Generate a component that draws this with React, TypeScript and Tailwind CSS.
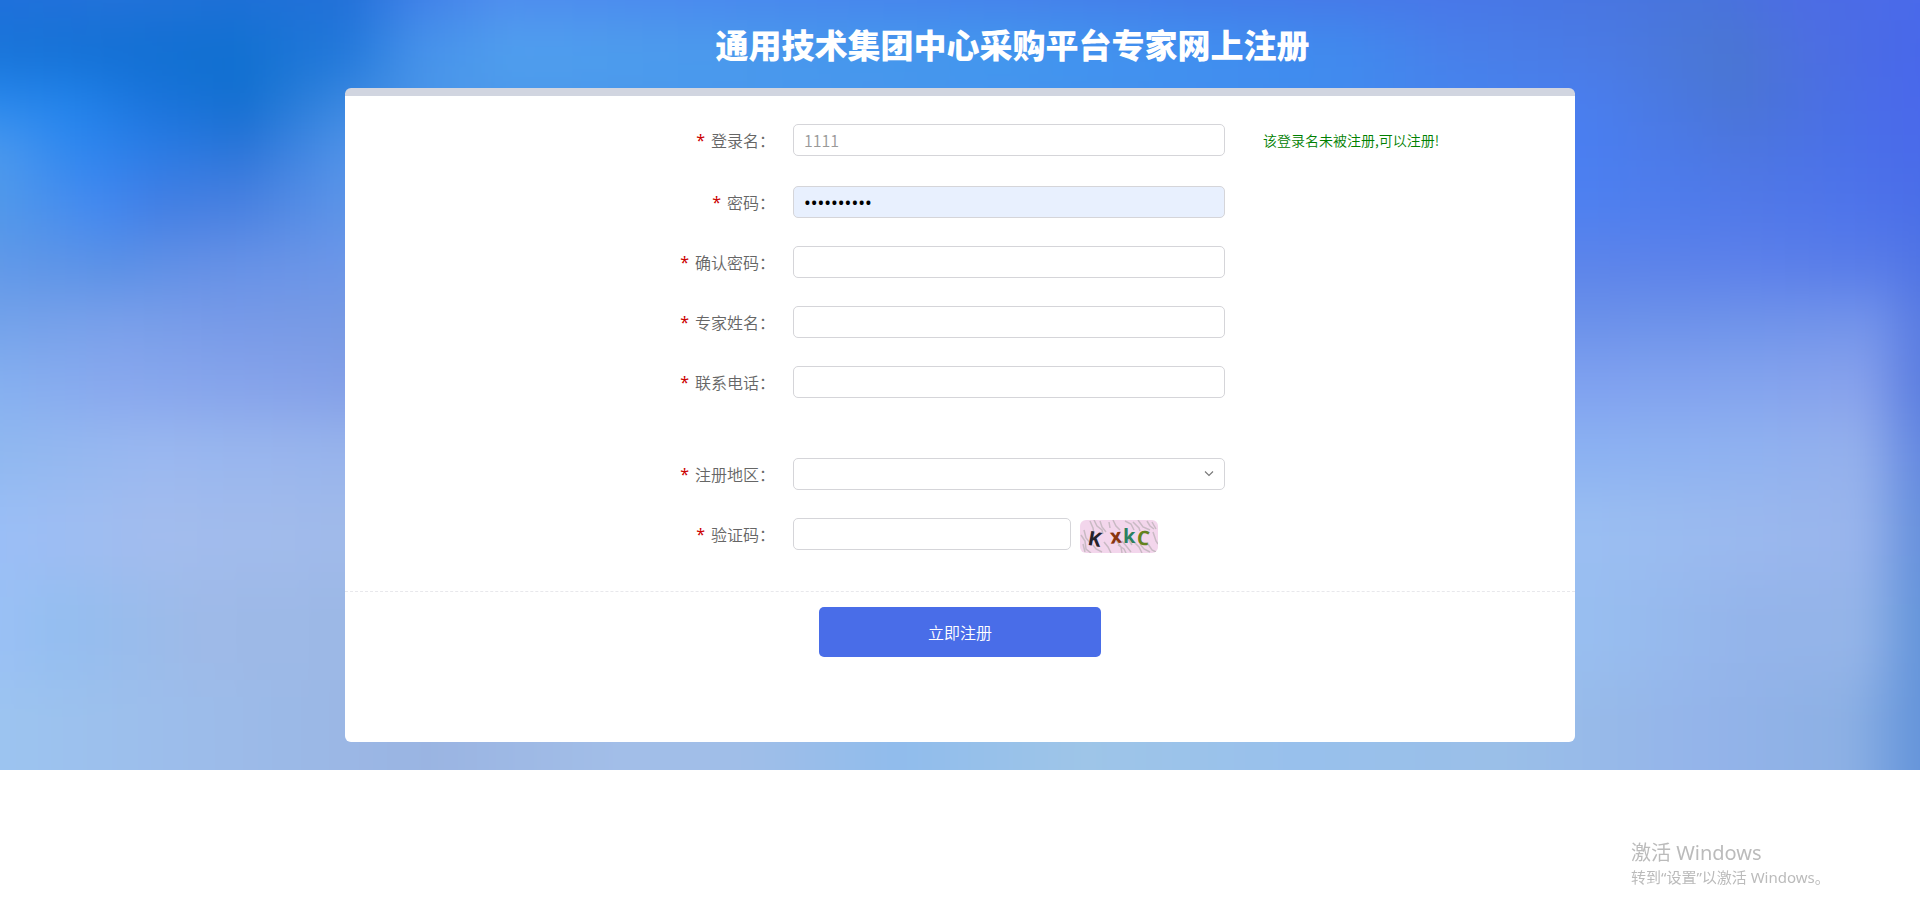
import type { ReactNode } from "react"
import { clsx } from "clsx"

type Band = { y: number; height: number; stops: [number, string][] }

// Horizontal color bands, blurred together into the backdrop
const bands: Band[] = [
  { y: -80, height: 100, stops: [[0, "#2070dc"], [115, "#2472da"], [230, "#1f70d8"], [345, "#2270d8"], [420, "#3f7fe8"], [500, "#4f8cee"], [800, "#4886ee"], [1200, "#447ae8"], [1450, "#4876e8"], [1700, "#4874dc"], [1800, "#4c6ce4"], [1920, "#4a6aea"]] },
  { y: 20, height: 60, stops: [[0, "#1874d8"], [115, "#1370d4"], [230, "#1070d0"], [345, "#2278da"], [420, "#4692ea"], [520, "#50a0ee"], [800, "#4898ec"], [1000, "#4298ee"], [1200, "#4090f0"], [1350, "#408aee"], [1450, "#4880ea"], [1600, "#4a7ae4"], [1730, "#4a76d2"], [1820, "#4c6ee2"], [1920, "#4868ea"]] },
  { y: 80, height: 45, stops: [[0, "#2888ee"], [70, "#2284ec"], [150, "#1a74dc"], [240, "#126fd0"], [345, "#3a88e0"], [450, "#4c98ea"], [800, "#4898ee"], [1300, "#408cee"], [1590, "#4a7eee"], [1740, "#4a74d6"], [1850, "#4a6ee6"], [1920, "#4a68ec"]] },
  { y: 125, height: 50, stops: [[0, "#4a98ee"], [70, "#3088f0"], [150, "#2a7ce6"], [240, "#2a74d8"], [345, "#4f92e8"], [1590, "#4a7ef0"], [1740, "#4c76e0"], [1850, "#4a70e8"], [1920, "#4a6aea"]] },
  { y: 175, height: 60, stops: [[0, "#5098ea"], [100, "#4288f0"], [160, "#427ee4"], [240, "#4880e0"], [345, "#5c94e8"], [1590, "#4e80f0"], [1750, "#5078e8"], [1850, "#4e74ea"], [1920, "#4a6ee8"]] },
  { y: 235, height: 60, stops: [[0, "#6098e8"], [115, "#5a90e6"], [200, "#6490e6"], [345, "#6c96e8"], [1590, "#5c84ea"], [1750, "#5c80ea"], [1890, "#567ae8"], [1920, "#5074e4"]] },
  { y: 295, height: 60, stops: [[0, "#74a2ea"], [115, "#7aa0ea"], [230, "#789ae8"], [345, "#789ae4"], [1590, "#6c92ea"], [1750, "#7094ea"], [1870, "#7494ea"], [1920, "#5a7ce2"]] },
  { y: 355, height: 65, stops: [[0, "#86b0f0"], [115, "#88a8ee"], [345, "#84a0e8"], [1590, "#80a2f0"], [1750, "#84a4ee"], [1860, "#88a2ec"], [1920, "#5c7ee0"]] },
  { y: 420, height: 70, stops: [[0, "#90b8f0"], [150, "#9ab8f0"], [345, "#98b4ec"], [1590, "#8cb2f2"], [1750, "#90b2f0"], [1860, "#94b0ec"], [1920, "#6488e0"]] },
  { y: 490, height: 90, stops: [[0, "#9abef6"], [150, "#a2bcee"], [345, "#a0baea"], [1590, "#9abef2"], [1750, "#9ab8ee"], [1860, "#98b4ec"], [1920, "#6690dc"]] },
  { y: 580, height: 100, stops: [[0, "#9ac0f5"], [60, "#94bef0"], [200, "#9ebae8"], [345, "#9cb8e6"], [1590, "#98bef0"], [1750, "#94b4ea"], [1860, "#94b4e8"], [1920, "#6494da"]] },
  { y: 680, height: 180, stops: [[0, "#9cc4f0"], [200, "#9cbcea"], [430, "#9ab4e2"], [620, "#a2bee8"], [740, "#a0bee8"], [900, "#90bcec"], [1080, "#9ec5e8"], [1300, "#98c0ec"], [1500, "#9abfe8"], [1700, "#94b4ea"], [1850, "#8cb0e4"], [1920, "#6494da"]] },
]

function Backdrop() {
  return (
    <svg
      aria-hidden="true"
      className="absolute inset-0 -z-10 h-full w-full"
      viewBox="0 0 1920 770"
      preserveAspectRatio="none"
    >
      <defs>
        <filter
          id="soften"
          filterUnits="userSpaceOnUse"
          x="-100"
          y="-100"
          width="2120"
          height="970"
          colorInterpolationFilters="sRGB"
        >
          <feGaussianBlur stdDeviation="14 26" />
        </filter>
        {bands.map((band) => (
          <linearGradient key={band.y} id={`band${band.y}`} gradientUnits="userSpaceOnUse" x1="0" y1="0" x2="1920" y2="0">
            {band.stops.map(([x, color]) => (
              <stop key={x} offset={x / 1920} stopColor={color} />
            ))}
          </linearGradient>
        ))}
      </defs>
      <g filter="url(#soften)">
        {bands.map((band) => (
          <rect key={band.y} x="-100" y={band.y} width="2120" height={band.height + 1} fill={`url(#band${band.y})`} />
        ))}
      </g>
    </svg>
  )
}

function Captcha() {
  return (
    <svg width="78" height="33" viewBox="0 0 78 33" role="img" aria-label="KXKC" className="shrink-0 rounded-md">
      <rect width="78" height="33" fill="#f3d6ec" />
      <g fill="none" stroke="#c9bac4" strokeWidth="1.5">
        <path d="M1 15l4 6 1 8 5 4M4 10l2 8 5 6M10 1l3 7 1 6M14 0l3 6 5 4 1 4M20 1l2 6 4 5M24 22l4 5 3 6M29 2l1 6M33 0l3 6 4 4M36 20l5 7 1 6M38 25l6 4 2 4M42 21l5 6 4 5" />
        <path d="M45 1l6 3 3 6M53 2l6 6 1 3M58 0l5 7 7 3M67 1l3 5 4 3M72 2l4 7M73 12l3 9 2 3M68 24l4 6 4 2M54 22l5 5 3 6M60 24l4 5 6 3M13 25l3 4 6 3M3 24l2 8M48 19l4 6" />
      </g>
      <g className="font-['Open_Sans',sans-serif] font-bold" fontSize="20">
        <text x="8" y="26" fill="#25222b" transform="rotate(10 15 20)">K</text>
        <text x="30" y="23" fill="#8a3510" transform="rotate(-6 37 17)">x</text>
        <text x="43" y="23" fill="#2c8061">k</text>
        <text x="57" y="25" fill="#63821f" transform="rotate(6 64 17)">C</text>
      </g>
    </svg>
  )
}

const control =
  "h-8 w-full rounded-[5px] border border-[#d5d5d9] bg-white px-2.5 text-base text-[#999] outline-none"

interface FieldRowProps {
  id: string
  label: string
  className?: string
  hint?: string
  children: ReactNode
}

function FieldRow({ id, label, className, hint, children }: FieldRowProps) {
  return (
    <div
      className={clsx(
        "grid grid-cols-[minmax(0,430px)_minmax(0,432px)_minmax(0,1fr)] items-center gap-x-[18px]",
        className ?? "mb-7"
      )}
    >
      <label htmlFor={id} className="flex h-8 items-center justify-end gap-1.5 text-base text-[#666]">
        <span className="font-['Noto_Sans',sans-serif] font-normal text-[#c00]">*</span>
        {label}：
      </label>
      {children}
      {hint && <p className="pl-5 text-sm text-[#008000]">{hint}</p>}
    </div>
  )
}

export default function App() {
  return (
    <div className="min-h-screen bg-white font-['Noto_Sans_CJK_SC',sans-serif] font-[350]">
      <main className="relative isolate overflow-hidden pb-7">
        <Backdrop />

        <h1 className="flex h-[88px] items-center justify-center pt-0.5 pl-[105px] text-[33px] font-black text-white">
          通用技术集团中心采购平台专家网上注册
        </h1>

        <form
          className="mx-auto w-full max-w-[1230px] rounded-md border-t-8 border-[#d1d5e0] bg-white pt-7 pb-[85px]"
          onSubmit={(e) => e.preventDefault()}
        >
          <FieldRow id="loginName" label="登录名" className="mb-[30px]" hint="该登录名未被注册,可以注册!">
            <input id="loginName" type="text" defaultValue="1111" className={control} />
          </FieldRow>
          <FieldRow id="password" label="密码">
            <input
              id="password"
              type="password"
              defaultValue="abcd123456"
              autoComplete="new-password"
              className="h-8 w-full rounded-[5px] border border-[#d5d5d9] bg-[#e8f0fe] px-2.5 font-['Noto_Sans',sans-serif] text-lg font-normal text-black outline-none"
            />
          </FieldRow>
          <FieldRow id="confirm" label="确认密码">
            <input id="confirm" type="password" autoComplete="new-password" className={control} />
          </FieldRow>
          <FieldRow id="expertName" label="专家姓名">
            <input id="expertName" type="text" className={control} />
          </FieldRow>
          <FieldRow id="phone" label="联系电话" className="mb-[60px]">
            <input id="phone" type="tel" className={control} />
          </FieldRow>
          <FieldRow id="region" label="注册地区">
            <div className="relative">
              <select id="region" defaultValue="" className={clsx(control, "block appearance-none")}>
                <option value=""></option>
                <option value="beijing">北京</option>
                <option value="shanghai">上海</option>
              </select>
              <svg
                aria-hidden="true"
                className="pointer-events-none absolute top-3 right-[11px]"
                width="10"
                height="8"
                viewBox="0 0 10 8"
                fill="none"
                stroke="#777"
                strokeWidth="1.1"
              >
                <path d="M1 1.5l4 4 4-4" />
              </svg>
            </div>
          </FieldRow>
          <FieldRow id="captcha" label="验证码" className="mb-[41px]">
            <div className="flex h-8 items-start gap-[9px]">
              <input id="captcha" type="text" className={clsx(control, "max-w-[278px]")} />
              <div className="pt-0.5">
                <Captcha />
              </div>
            </div>
          </FieldRow>

          <div className="flex justify-center border-t border-dashed border-[#e8e8ec] pt-[15px]">
            <button type="submit" className="h-[50px] w-[282px] rounded-[5px] bg-[#496de8] text-base text-white">
              立即注册
            </button>
          </div>
        </form>
      </main>

      {/* Activation notice */}
      <div className="pointer-events-none fixed right-0 bottom-[21px] w-[289px] font-['Noto_Sans','Noto_Sans_CJK_SC',sans-serif] font-normal text-[#bbb]">
        <p className="text-xl">激活 Windows</p>
        <p className="text-[15px] leading-5">转到“设置”以激活 Windows。</p>
      </div>
    </div>
  )
}
